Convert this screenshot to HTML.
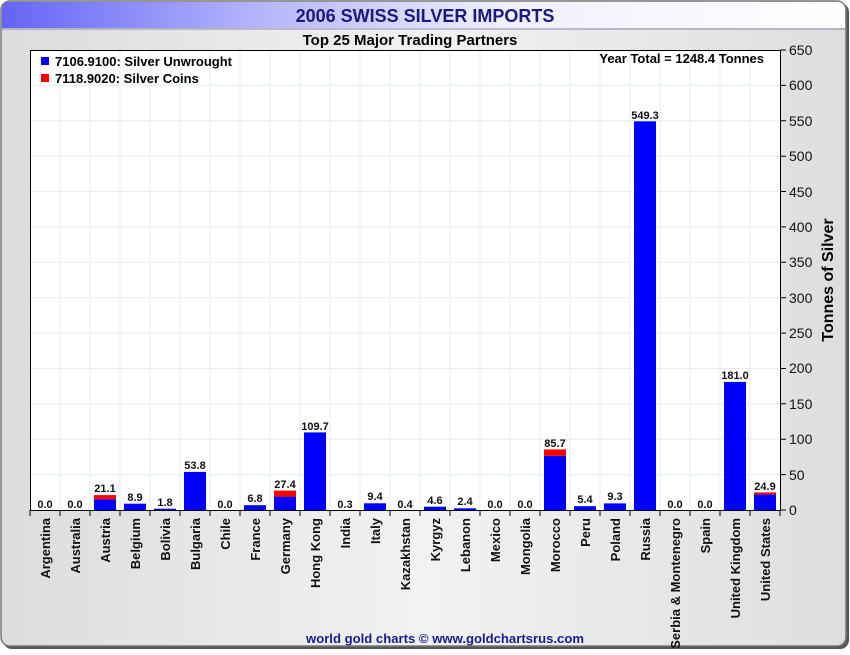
<!DOCTYPE html><html><head><meta charset="utf-8"><style>
body{margin:0;width:850px;height:650px;overflow:hidden;background:#fff;font-family:"Liberation Sans",Arial,sans-serif}
</style></head><body>
<svg width="850" height="650" xmlns="http://www.w3.org/2000/svg" font-family="Liberation Sans, Arial, sans-serif">
<defs>
<linearGradient id="bg" x1="0" x2="1" y1="0" y2="0"><stop offset="0" stop-color="#dcdcdc"/><stop offset="0.5" stop-color="#f2f2f2"/><stop offset="1" stop-color="#dedede"/></linearGradient>
<linearGradient id="tb" x1="0" x2="1" y1="0" y2="0"><stop offset="0" stop-color="#6464f6"/><stop offset="0.3" stop-color="#b4b4fb"/><stop offset="0.6" stop-color="#f0f0ff"/><stop offset="1" stop-color="#ffffff"/></linearGradient>
</defs>
<rect x="3" y="3" width="846" height="646" rx="9" fill="#555"/>
<rect x="1" y="1" width="845" height="645" rx="9" fill="url(#bg)" stroke="#777" stroke-width="1.5"/>
<path d="M2,28 V10 Q2,2 10,2 H837 Q845,2 845,10 V28 Z" fill="url(#tb)"/>
<line x1="2" y1="29" x2="845" y2="29" stroke="#8888aa" stroke-width="1"/>
<text x="425" y="22" text-anchor="middle" font-size="18" font-weight="bold" fill="#1a1a80">2006 SWISS SILVER IMPORTS</text>
<text x="410" y="45" text-anchor="middle" font-size="15" font-weight="bold" fill="#000">Top 25 Major Trading Partners</text>
<rect x="30" y="50" width="750" height="460" fill="#fff"/>
<g stroke="#e3eef7" stroke-width="1">
<path d="M60,50V510M90,50V510M120,50V510M150,50V510M180,50V510M210,50V510M240,50V510M270,50V510M300,50V510M330,50V510M360,50V510M390,50V510M420,50V510M450,50V510M480,50V510M510,50V510M540,50V510M570,50V510M600,50V510M630,50V510M660,50V510M690,50V510M720,50V510M750,50V510"/>
<path d="M30,85.4H780M30,120.8H780M30,156.2H780M30,191.5H780M30,226.9H780M30,262.3H780M30,297.7H780M30,333.1H780M30,368.5H780M30,403.8H780M30,439.2H780M30,474.6H780"/>
</g>
<rect x="30.5" y="50.5" width="750" height="460" fill="none" stroke="#000"/>
<g stroke="#000">
<path d="M30,510V516M60,510V516M90,510V516M120,510V516M150,510V516M180,510V516M210,510V516M240,510V516M270,510V516M300,510V516M330,510V516M360,510V516M390,510V516M420,510V516M450,510V516M480,510V516M510,510V516M540,510V516M570,510V516M600,510V516M630,510V516M660,510V516M690,510V516M720,510V516M750,510V516M780,510V516"/>
<path d="M780,50H786M780,85.4H786M780,120.8H786M780,156.2H786M780,191.5H786M780,226.9H786M780,262.3H786M780,297.7H786M780,333.1H786M780,368.5H786M780,403.8H786M780,439.2H786M780,474.6H786M780,510H786"/>
</g>
<g font-size="14" fill="#111">
<text x="789" y="55">650</text><text x="789" y="90">600</text><text x="789" y="126">550</text><text x="789" y="161">500</text><text x="789" y="197">450</text><text x="789" y="232">400</text><text x="789" y="267">350</text><text x="789" y="303">300</text><text x="789" y="338">250</text><text x="789" y="373">200</text><text x="789" y="409">150</text><text x="789" y="444">100</text><text x="789" y="480">50</text><text x="789" y="515">0</text>
</g>
<text transform="translate(833,280) rotate(-90)" text-anchor="middle" font-size="16" font-weight="bold">Tonnes of Silver</text>
<rect x="41" y="57" width="8" height="8" fill="#0000ff"/><text x="55" y="66" font-size="13" font-weight="bold">7106.9100: Silver Unwrought</text>
<rect x="41" y="74" width="8" height="8" fill="#ff0000"/><text x="55" y="83" font-size="13" font-weight="bold">7118.9020: Silver Coins</text>
<text x="764" y="63" text-anchor="end" font-size="13" font-weight="bold">Year Total = 1248.4 Tonnes</text>
<g fill="#0000ff">
<rect x="94" y="499.4" width="22" height="10.6"/><rect x="124" y="503.7" width="22" height="6.3"/><rect x="154" y="508.7" width="22" height="1.3"/><rect x="184" y="471.9" width="22" height="38.1"/><rect x="244" y="505.2" width="22" height="4.8"/><rect x="274" y="496.6" width="22" height="13.4"/><rect x="304" y="432.4" width="22" height="77.6"/><rect x="364" y="503.3" width="22" height="6.7"/><rect x="424" y="506.7" width="22" height="3.3"/><rect x="454" y="508.3" width="22" height="1.7"/><rect x="544" y="455.8" width="22" height="54.2"/><rect x="574" y="506.2" width="22" height="3.8"/><rect x="604" y="503.4" width="22" height="6.6"/><rect x="634" y="121.3" width="22" height="388.7"/><rect x="724" y="381.9" width="22" height="128.1"/><rect x="754" y="494.4" width="22" height="15.6"/>
</g>
<g fill="#ff0000">
<rect x="94" y="495.1" width="22" height="4.3"/><rect x="274" y="490.6" width="22" height="6"/><rect x="544" y="449.4" width="22" height="6.4"/><rect x="754" y="492.4" width="22" height="2"/>
</g>
<g font-size="11" font-weight="bold" text-anchor="middle" fill="#111">
<text x="45" y="508">0.0</text><text x="75" y="508">0.0</text><text x="105" y="492">21.1</text><text x="135" y="501">8.9</text><text x="165" y="506">1.8</text><text x="195" y="469">53.8</text><text x="225" y="508">0.0</text><text x="255" y="502">6.8</text><text x="285" y="488">27.4</text><text x="315" y="430">109.7</text><text x="345" y="508">0.3</text><text x="375" y="500">9.4</text><text x="405" y="508">0.4</text><text x="435" y="504">4.6</text><text x="465" y="505">2.4</text><text x="495" y="508">0.0</text><text x="525" y="508">0.0</text><text x="555" y="447">85.7</text><text x="585" y="503">5.4</text><text x="615" y="500">9.3</text><text x="645" y="119">549.3</text><text x="675" y="508">0.0</text><text x="705" y="508">0.0</text><text x="735" y="379">181.0</text><text x="765" y="490">24.9</text>
</g>
<g font-size="13" font-weight="bold" text-anchor="end" fill="#111">
<text transform="translate(50,518) rotate(-90)">Argentina</text>
<text transform="translate(80,518) rotate(-90)">Australia</text>
<text transform="translate(110,518) rotate(-90)">Austria</text>
<text transform="translate(140,518) rotate(-90)">Belgium</text>
<text transform="translate(170,518) rotate(-90)">Bolivia</text>
<text transform="translate(200,518) rotate(-90)">Bulgaria</text>
<text transform="translate(230,518) rotate(-90)">Chile</text>
<text transform="translate(260,518) rotate(-90)">France</text>
<text transform="translate(290,518) rotate(-90)">Germany</text>
<text transform="translate(320,518) rotate(-90)">Hong Kong</text>
<text transform="translate(350,518) rotate(-90)">India</text>
<text transform="translate(380,518) rotate(-90)">Italy</text>
<text transform="translate(410,518) rotate(-90)">Kazakhstan</text>
<text transform="translate(440,518) rotate(-90)">Kyrgyz</text>
<text transform="translate(470,518) rotate(-90)">Lebanon</text>
<text transform="translate(500,518) rotate(-90)">Mexico</text>
<text transform="translate(530,518) rotate(-90)">Mongolia</text>
<text transform="translate(560,518) rotate(-90)">Morocco</text>
<text transform="translate(590,518) rotate(-90)">Peru</text>
<text transform="translate(620,518) rotate(-90)">Poland</text>
<text transform="translate(650,518) rotate(-90)">Russia</text>
<text transform="translate(680,518) rotate(-90)">Serbia &amp; Montenegro</text>
<text transform="translate(710,518) rotate(-90)">Spain</text>
<text transform="translate(740,518) rotate(-90)">United Kingdom</text>
<text transform="translate(770,518) rotate(-90)">United States</text>
</g>
<text x="445" y="643" text-anchor="middle" font-size="13" font-weight="bold" fill="#1a1a90" textLength="278" lengthAdjust="spacingAndGlyphs">world gold charts © www.goldchartsrus.com</text>
</svg>
</body></html>
